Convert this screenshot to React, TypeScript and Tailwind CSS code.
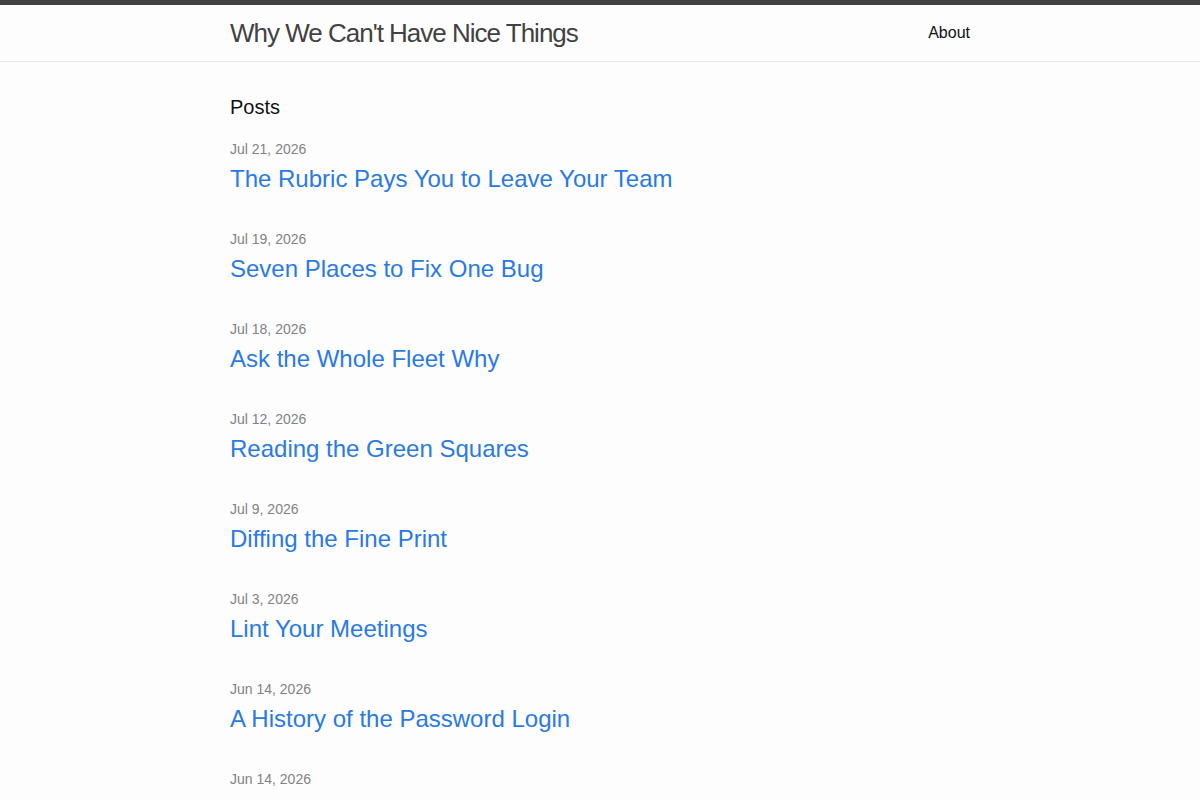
const posts = [
  { date: "Jul 21, 2026", title: "The Rubric Pays You to Leave Your Team" },
  { date: "Jul 19, 2026", title: "Seven Places to Fix One Bug" },
  { date: "Jul 18, 2026", title: "Ask the Whole Fleet Why" },
  { date: "Jul 12, 2026", title: "Reading the Green Squares" },
  { date: "Jul 9, 2026", title: "Diffing the Fine Print" },
  { date: "Jul 3, 2026", title: "Lint Your Meetings" },
  { date: "Jun 14, 2026", title: "A History of the Password Login" },
  { date: "Jun 14, 2026", title: "" },
]

export default function App() {
  return (
    <div className="min-h-screen bg-[#fdfdfd] text-[#111] font-['Liberation_Sans',Arial,sans-serif] text-base">
      {/* Header */}
      <header className="border-t-[5px] border-t-[#424242] border-b border-b-[#e8e8e8]">
        <div className="max-w-[800px] mx-auto px-[30px] h-[56px] flex justify-between items-center">
          <a href="#" className="text-[26px] leading-[56px] tracking-[-1px] font-light text-[#424242]">
            Why We Can't Have Nice Things
          </a>
          <nav>
            <a href="#" className="block leading-[54px] text-[#111]">
              About
            </a>
          </nav>
        </div>
      </header>

      {/* Content */}
      <main className="max-w-[800px] mx-auto px-[30px] pt-[30px]">
        <h2 className="text-[20px] leading-[30px] mb-[15px]">Posts</h2>
        <ul>
          {posts.map((p, i) => (
            <li key={i} className="mb-[30px]">
              <span className="block text-sm leading-[24px] text-[#828282]">{p.date}</span>
              {p.title && (
                <h3>
                  <a href="#" className="block text-[24px] leading-[36px] text-[#2a7ae2]">
                    {p.title}
                  </a>
                </h3>
              )}
            </li>
          ))}
        </ul>
      </main>
    </div>
  )
}
